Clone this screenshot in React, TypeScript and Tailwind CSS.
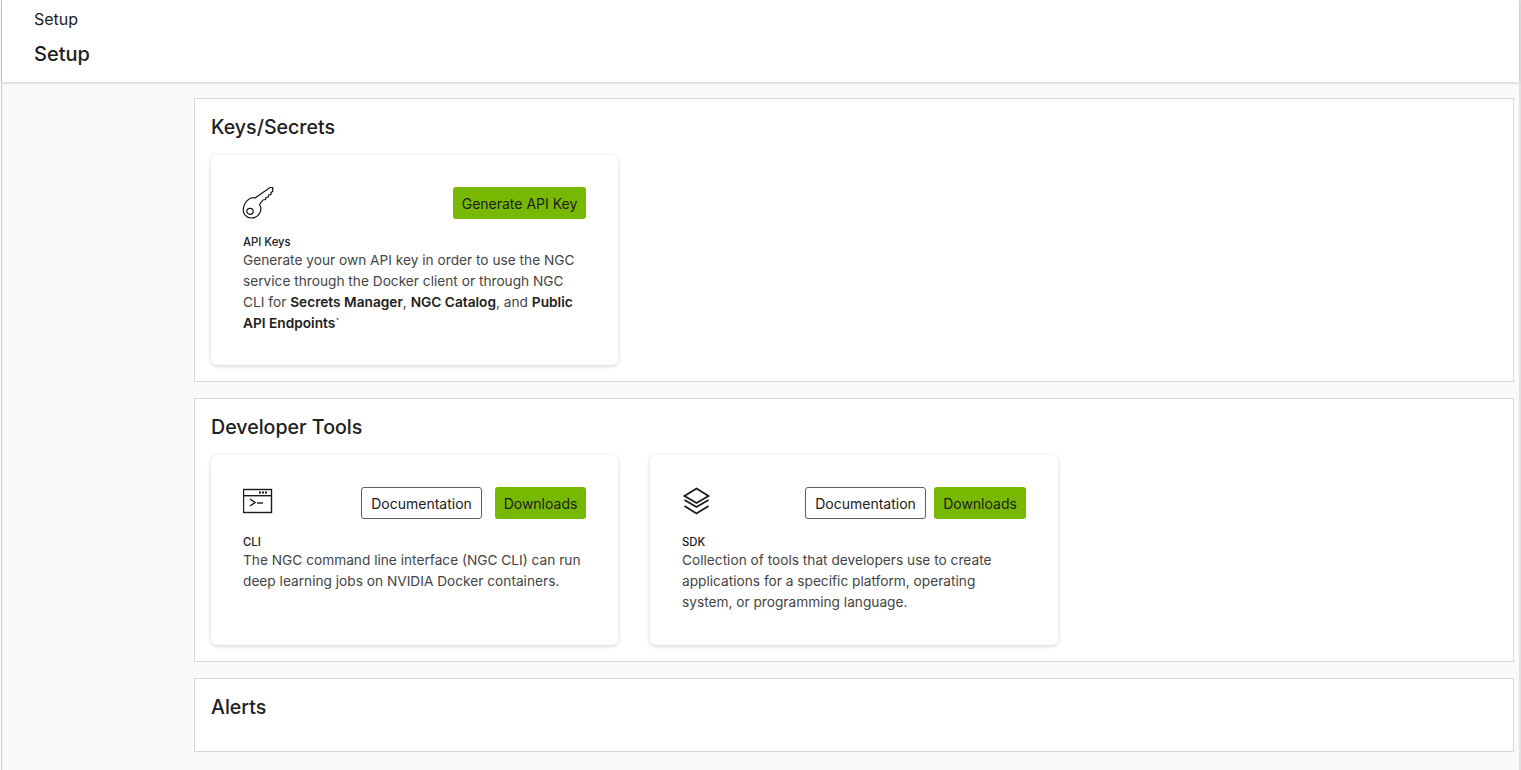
import { ReactNode } from 'react'

const font = { fontFamily: 'Inter, "Noto Sans", sans-serif' }

function KeyIcon() {
  return (
    <svg width="32" height="32" viewBox="0 -2 32 32" fill="none" stroke="#111111" strokeWidth="1.2" className="block overflow-visible">
      <path d="M12 9 L27 -1.5 L29.7 -1.5 L29.7 2.5 L28 3.5 L28 5.5 L25.7 6 L25.2 8 L23 8.5 L22.5 10.5 L20 11 L16.5 15.5 C20 21 16 29 8.5 29 C3 29 0 25 0.3 20.5 C0.7 13 7 7.5 12 9 Z" />
      <ellipse cx="7" cy="22.3" rx="3.2" ry="3" />
    </svg>
  )
}

function TerminalIcon() {
  return (
    <svg width="32" height="32" viewBox="0 0 32 32" fill="none" stroke="#1a1a1a" className="block">
      <rect x="0.5" y="2.5" width="28" height="23" strokeWidth="1.4" />
      <path d="M0.5 8.7 H28.5" strokeWidth="1.4" />
      <path d="M16 5.5 h2 M19 5.5 h2 M22 5.5 h2" strokeWidth="2" />
      <path d="M7 12 L12 15.5 L7 19" strokeWidth="1.4" />
      <path d="M14 16 H20" strokeWidth="1.4" />
    </svg>
  )
}

function StackIcon() {
  return (
    <svg width="32" height="32" viewBox="0 0 32 32" fill="none" stroke="#1a1a1a" strokeWidth="1.8" className="block">
      <path d="M14.5 1.5 L26.5 9 L14.5 16 L2.5 9 Z" />
      <path d="M2.5 13 L14.5 20 L26.5 13" />
      <path d="M2.5 19 L14.5 26.5 L26.5 19" />
    </svg>
  )
}

function GreenButton({ children, width }: { children: ReactNode; width: string }) {
  return (
    <button className={`h-8 ${width} rounded-[3px] bg-[#76b900] text-[14px] text-[#202020]`}>
      {children}
    </button>
  )
}

function OutlineButton({ children }: { children: ReactNode }) {
  return (
    <button className="h-8 w-[121px] rounded-[3px] border border-[#5e5e5e] bg-white text-[14px] text-[#202020]">
      {children}
    </button>
  )
}

function ToolCard({ icon, actions, title, children }: { icon: ReactNode; actions: ReactNode; title: string; children: ReactNode }) {
  return (
    <div className="bg-white rounded-md min-h-[190px] p-8 pb-[31px] shadow-[0_1px_4px_rgba(0,0,0,0.18)]">
      <div className="flex items-start justify-between mb-[15px] h-8">
        {icon}
        {actions}
      </div>
      <div className="text-[11.3px] font-[450] leading-4 text-[#202020]">{title}</div>
      <p className="text-[13.7px] leading-[21px] text-[#444444]">{children}</p>
    </div>
  )
}

function Section({ title, children }: { title: string; children?: ReactNode }) {
  return (
    <section className="border border-[#d8d8d8] bg-white px-4 pb-4 pt-3.5">
      <h2 className="text-[19.6px] font-[450] leading-7 mb-3.5 text-[#202020]">{title}</h2>
      {children}
    </section>
  )
}

export default function App() {
  return (
    <div style={font} className="h-[770px] overflow-hidden bg-white pl-px">
      <div className="h-full bg-[#fafafa] border-l border-r-2 border-l-[#cfcfcf] border-r-[#e2e2e2]">
        <header className="h-[82px] bg-white pl-8 shadow-[0_1px_3px_rgba(0,0,0,0.2)]">
          <div className="pt-[9px] text-[16px] leading-[20px] text-[#202020]">Setup</div>
          <h1 className="mt-[10px] text-[20px] font-[450] leading-[30px] text-[#202020]">Setup</h1>
        </header>
        <main className="ml-[192px] mr-[5px] mt-4 flex flex-col gap-4">
          <Section title="Keys/Secrets">
            <div className="grid grid-cols-[407px_408px] gap-8">
              <ToolCard icon={<KeyIcon />} actions={<GreenButton width="w-[133px]">Generate API Key</GreenButton>} title="API Keys">
                Generate your own API key in order to use the NGC service through the Docker client or through NGC CLI for{' '}
                <b className="font-semibold text-[#202020]">Secrets Manager</b>, <b className="font-semibold text-[#202020]">NGC Catalog</b>, and{' '}
                <b className="font-semibold text-[#202020]">Public API Endpoints</b>`
              </ToolCard>
            </div>
          </Section>
          <Section title="Developer Tools">
            <div className="grid grid-cols-[407px_408px] gap-8">
              <ToolCard
                icon={<TerminalIcon />}
                actions={
                  <div className="flex gap-[13px]">
                    <OutlineButton>Documentation</OutlineButton>
                    <GreenButton width="w-[91px]">Downloads</GreenButton>
                  </div>
                }
                title="CLI"
              >
                The NGC command line interface (NGC CLI) can run deep learning jobs on NVIDIA Docker containers.
              </ToolCard>
              <ToolCard
                icon={<StackIcon />}
                actions={
                  <div className="flex gap-2">
                    <OutlineButton>Documentation</OutlineButton>
                    <GreenButton width="w-[92px]">Downloads</GreenButton>
                  </div>
                }
                title="SDK"
              >
                Collection of tools that developers use to create applications for a specific platform, operating system, or programming language.
              </ToolCard>
            </div>
          </Section>
          <Section title="Alerts" />
        </main>
      </div>
    </div>
  )
}
